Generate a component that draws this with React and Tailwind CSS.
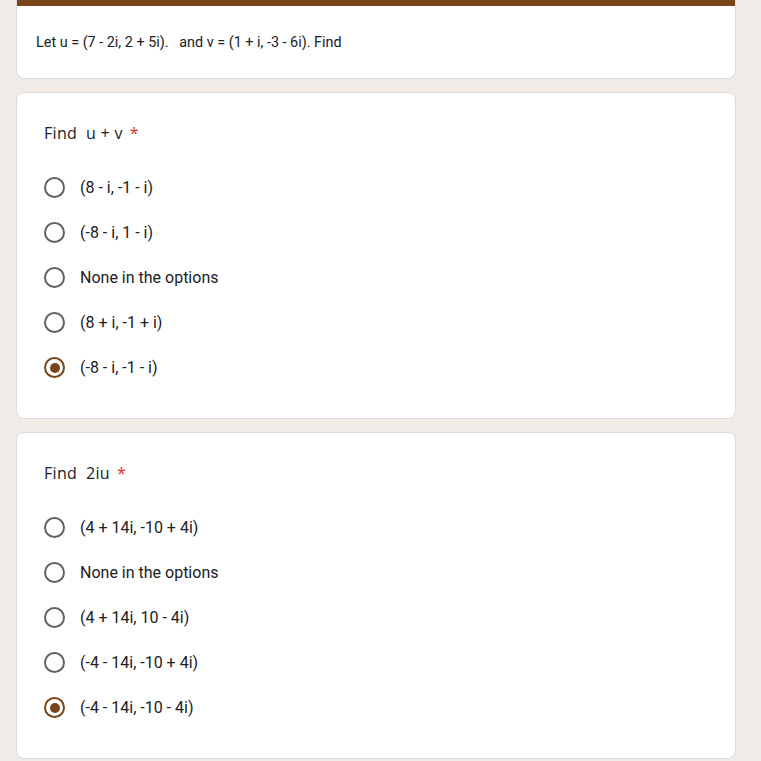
import React from "react";

const questions = [
  {
    title: "Find\u00a0\u00a0u + v",
    options: ["(8 - i, -1 - i)", "(-8 - i, 1 - i)", "None in the options", "(8 + i, -1 + i)", "(-8 - i, -1 - i)"],
    selected: 4,
  },
  {
    title: "Find\u00a0\u00a02iu",
    options: ["(4 + 14i, -10 + 4i)", "None in the options", "(4 + 14i, 10 - 4i)", "(-4 - 14i, -10 + 4i)", "(-4 - 14i, -10 - 4i)"],
    selected: 4,
  },
];

const Radio = ({checked}) => (
  <div
    className={`w-[21px] h-[21px] rounded-full border-2 flex items-center justify-center shrink-0 ${
      checked ? "border-[#774519]" : "border-[#5f6368]"
    }`}>
    {checked && <div className="w-[10px] h-[10px] rounded-full bg-[#774519]"></div>}
  </div>
);

const QuestionCard = ({q}) => (
  <div className="bg-white border border-[#dadce0] rounded-lg pt-[28px] pb-[28px] pl-[27px] pr-6">
    <div className="h-6 flex items-center text-[16px] text-[#202124] font-['Open_Sans',sans-serif] tracking-[0.3px]">
      {q.title}
      <span className="text-[#d93025] ml-[7px]">*</span>
    </div>
    <div className="mt-[20px] flex flex-col">
      {q.options.map((opt, i) => (
        <div key={i} className="h-[45px] flex items-center">
          <Radio checked={i === q.selected} />
          <span className="ml-[15px] text-[16px] text-[#202124] font-['Roboto',sans-serif]">{opt}</span>
        </div>
      ))}
    </div>
  </div>
);

export default function App() {
  return (
    <div className="min-h-[761px] bg-[#f0ebe7] font-['Roboto',sans-serif]">
      <div className="ml-[16px] w-[720px] flex flex-col gap-[13px]">
        {/* header card */}
        <div className="bg-white border border-[#dadce0] border-t-0 rounded-b-lg overflow-hidden">
          <div className="h-[6px] bg-[#774519]"></div>
          <div className="h-[72px] flex items-center pl-[19px] pt-[1px]">
            <span className="text-[14.4px] text-[#202124] whitespace-pre">
              {"Let u = (7 - 2i, 2 + 5i).   and v = (1 + i, -3 - 6i). Find"}
            </span>
          </div>
        </div>
        {questions.map((q, i) => (
          <QuestionCard key={i} q={q} />
        ))}
      </div>
    </div>
  );
}
